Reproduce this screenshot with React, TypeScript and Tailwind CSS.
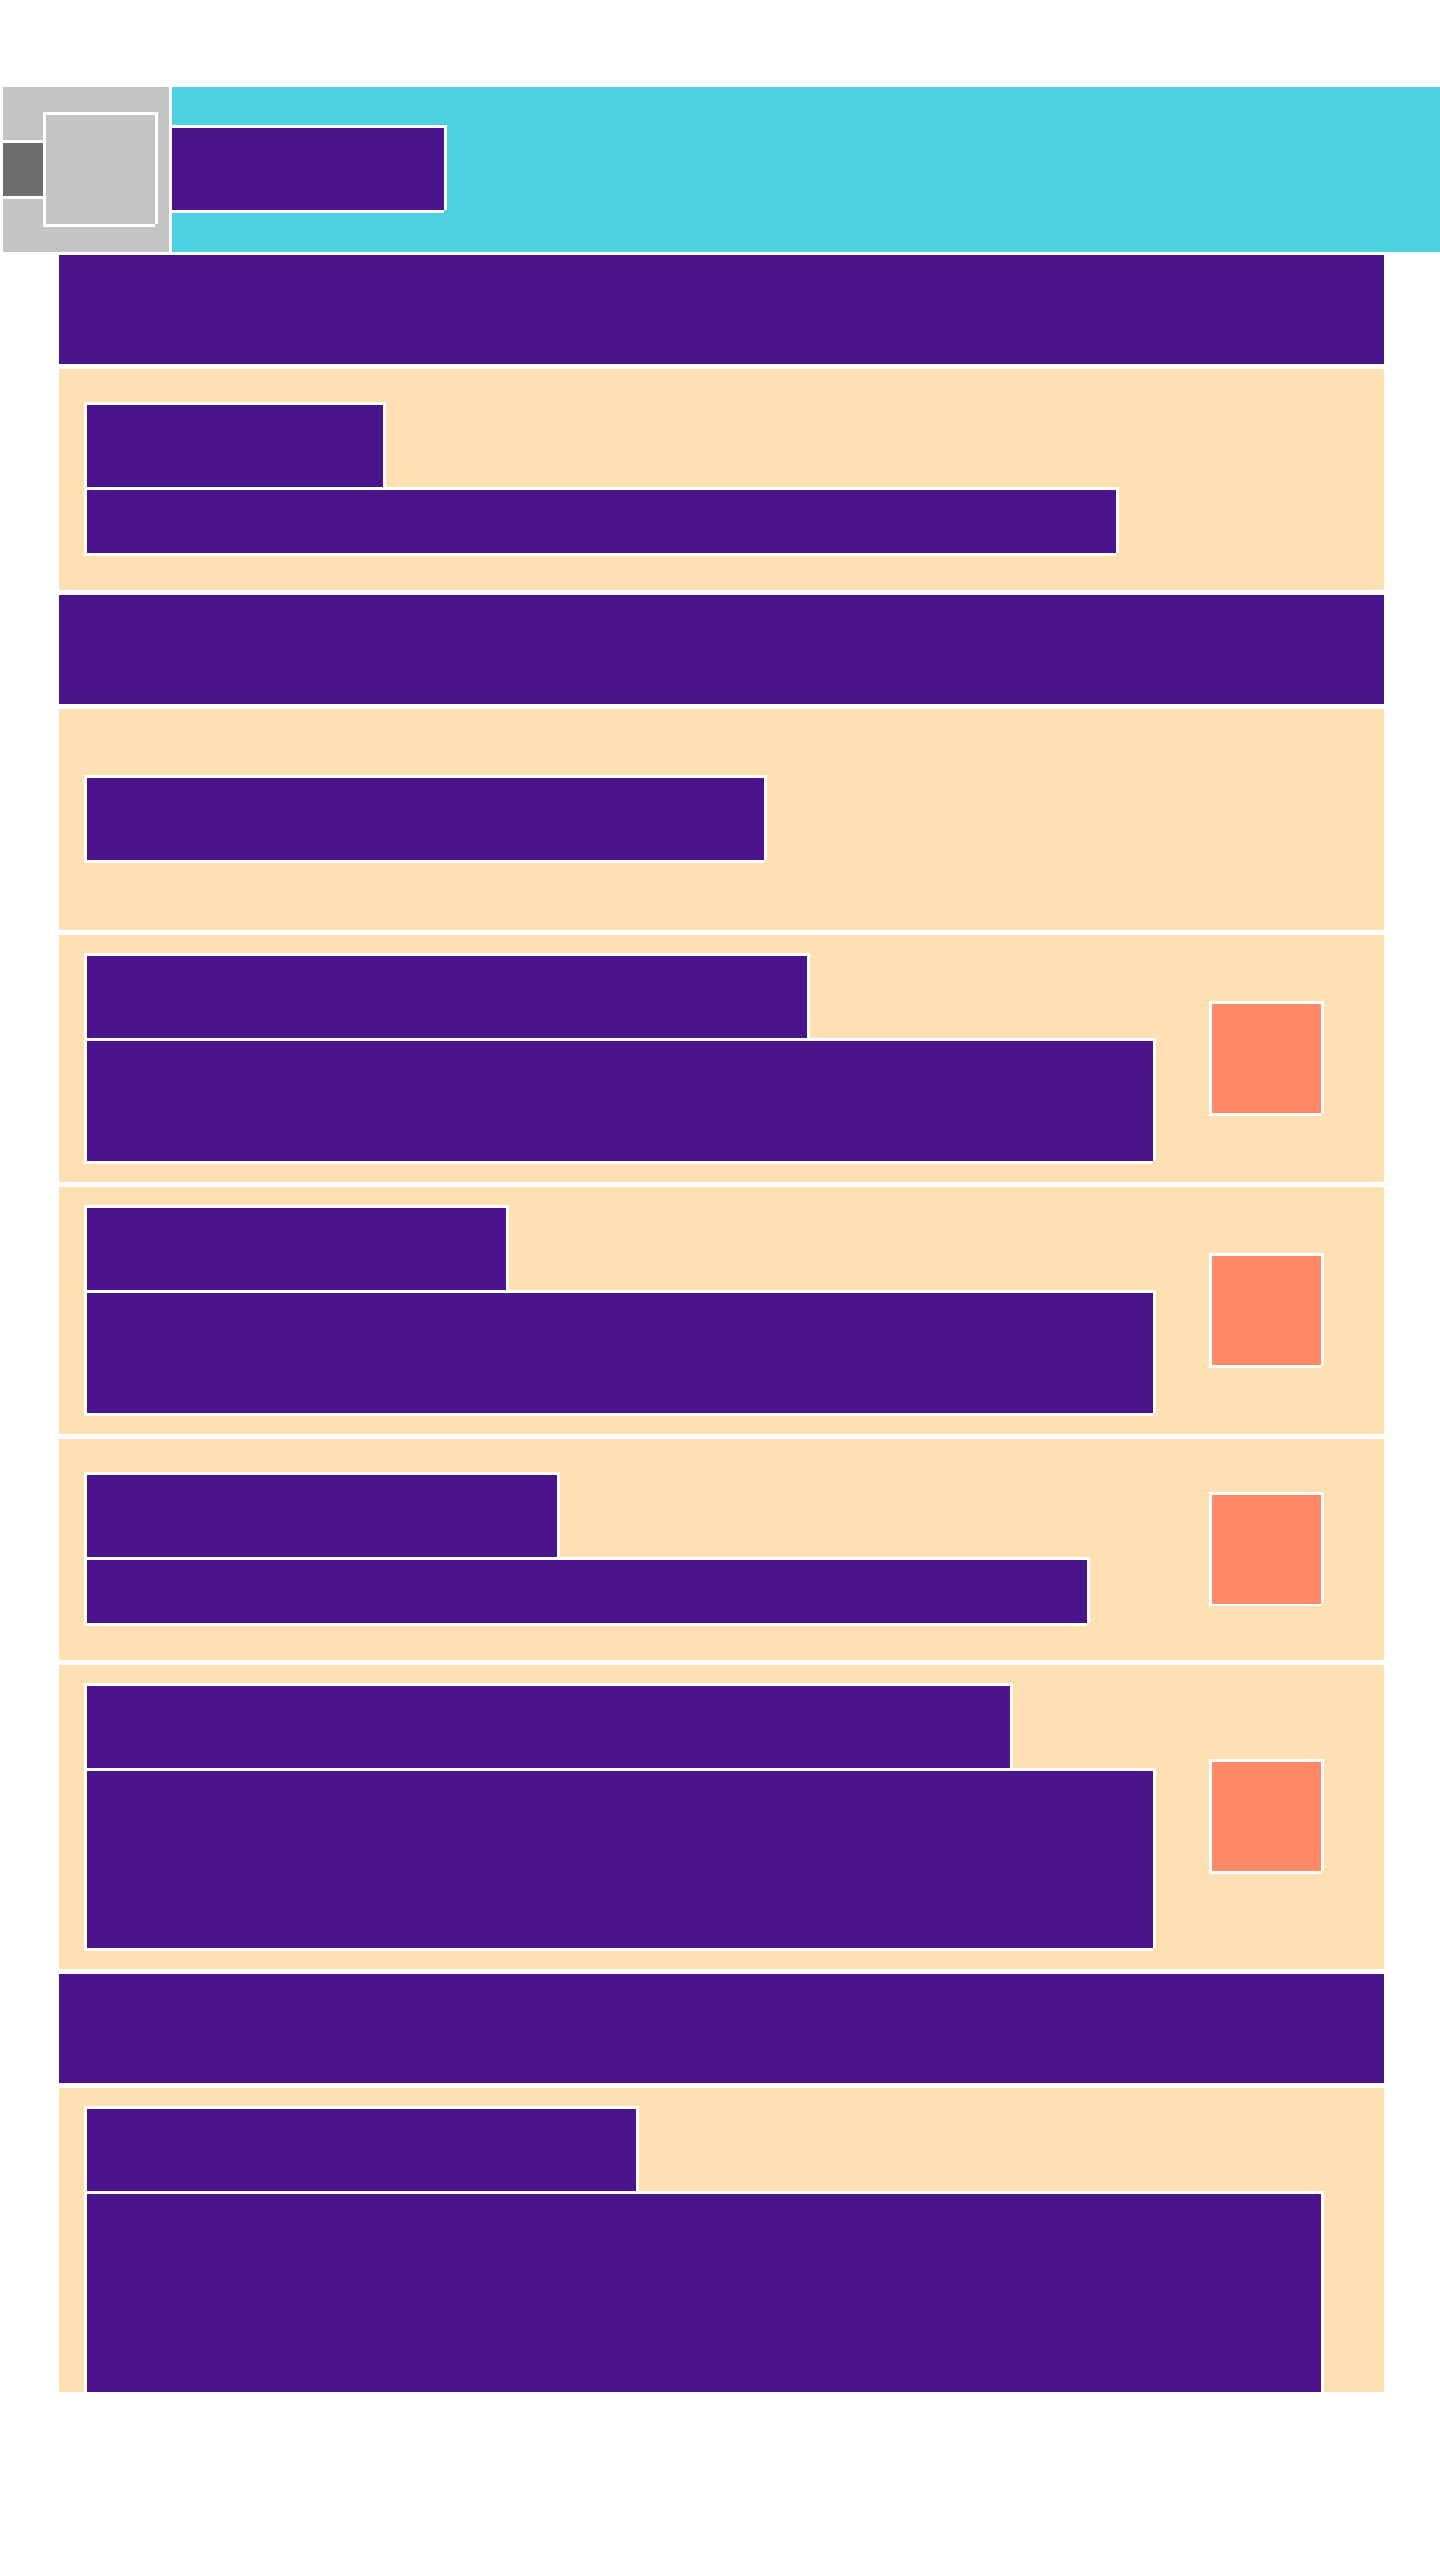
// white 3px frame with the bottom-right corner cut out, as in the wireframe
const frame =
  "border-[3px] border-white [clip-path:polygon(0_0,100%_0,100%_calc(100%-3px),calc(100%-3px)_calc(100%-3px),calc(100%-3px)_100%,0_100%)]";

function Band() {
  return <div className="h-[109px] shrink-0 bg-[#4a148c]" />;
}

function Title({ className }: { className: string }) {
  return <div className={`${frame} h-[88px] bg-[#4a148c] ${className}`} />;
}

function Body({ className }: { className: string }) {
  return <div className={`${frame} relative -mt-[3px] bg-[#4a148c] ${className}`} />;
}

function Thumb({ className = "" }: { className?: string }) {
  return <div className={`${frame} size-[115px] shrink-0 self-center bg-[#ff8a65] ${className}`} />;
}

function Row({ className, children }: { className: string; children: React.ReactNode }) {
  return (
    <div className={`flex shrink-0 items-start justify-between bg-[#ffe0b2] pl-[25px] pr-[60px] ${className}`}>
      {children}
    </div>
  );
}

export default function App() {
  return (
    <div className="min-h-[2560px] overflow-hidden bg-white pt-[84px]">
      <header className="flex h-[171px] items-start">
        <div className={`${frame} flex h-[171px] w-[172px] shrink-0 items-center bg-[#c4c4c4]`}>
          <div className="h-[59px] w-[40px] border-y-[3px] border-white bg-[#6d6d6d]" />
          <div className={`${frame} size-[115px] bg-[#c4c4c4]`} />
        </div>
        <div className="mt-[3px] h-[165px] flex-1 bg-[#4dd0e1] pt-[38px]">
          <div className={`${frame} h-[88px] w-[275px] border-l-0 bg-[#4a148c]`} />
        </div>
      </header>

      <main className="ml-[59px] flex h-[2137px] w-[1325px] flex-col gap-[5px] overflow-hidden">
        <Band />

        <Row className="pb-[34px] pt-[33px]">
          <div className="flex flex-col">
            <Title className="w-[302px]" />
            <Body className="h-[69px] w-[1035px]" />
          </div>
        </Row>

        <Band />

        <Row className="pb-[67px] pt-[66px]">
          <Title className="w-[683px]" />
        </Row>

        <Row className="py-[18px]">
          <div className="flex flex-col">
            <Title className="w-[726px]" />
            <Body className="h-[126px] w-[1072px]" />
          </div>
          <Thumb />
        </Row>

        <Row className="py-[18px]">
          <div className="flex flex-col">
            <Title className="w-[425px]" />
            <Body className="h-[126px] w-[1072px]" />
          </div>
          <Thumb />
        </Row>

        <Row className="pb-[34px] pt-[33px]">
          <div className="flex flex-col">
            <Title className="w-[476px]" />
            <Body className="h-[69px] w-[1006px]" />
          </div>
          <Thumb />
        </Row>

        <Row className="py-[18px]">
          <div className="flex flex-col">
            <Title className="w-[929px]" />
            <Body className="h-[183px] w-[1072px]" />
          </div>
          <Thumb className="mb-px" />
        </Row>

        <Band />

        <Row className="pt-[18px]">
          <div className="flex flex-col">
            <Title className="w-[555px]" />
            <Body className="h-[300px] w-[1240px]" />
          </div>
        </Row>
      </main>
    </div>
  );
}
